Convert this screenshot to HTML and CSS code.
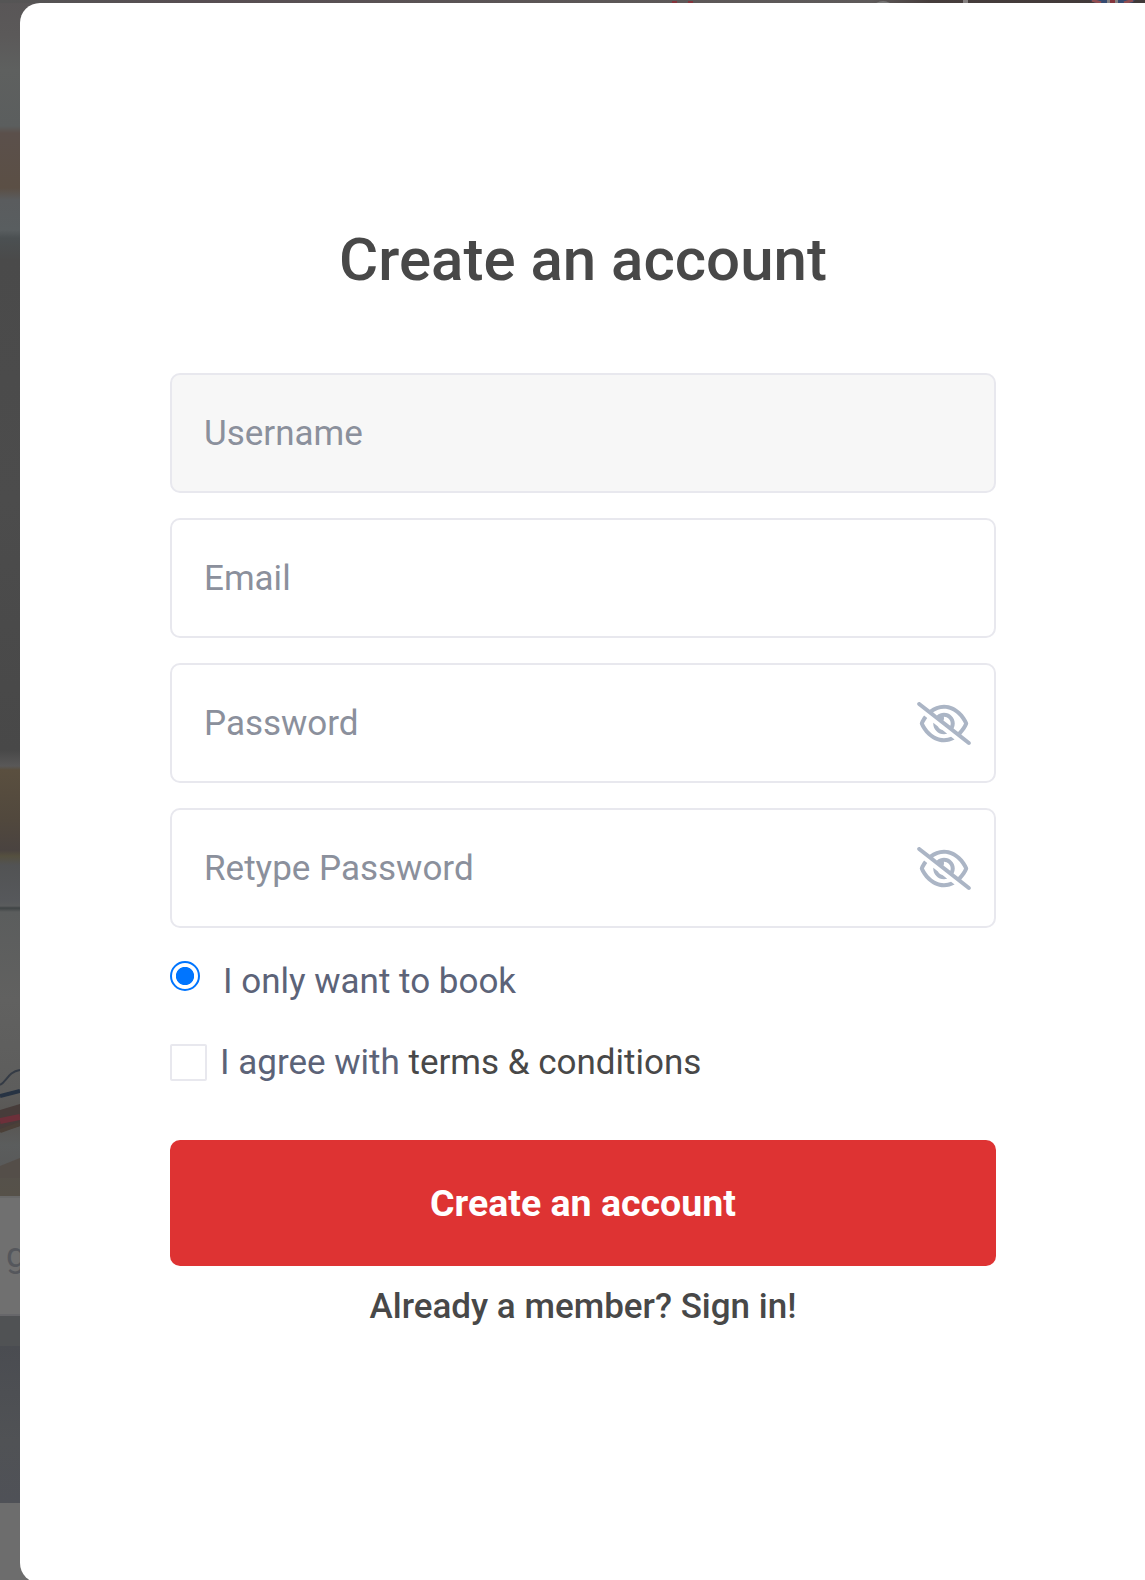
FILE: index.html
```html
<!DOCTYPE html>
<html lang="en">
<head>
    <meta charset="UTF-8">
    <meta name="viewport" content="width=device-width, initial-scale=1.0">
    <title>Create an account</title>
    <link rel="stylesheet" href="styles.css">
</head>
<body>
    <div class="page">
        <div class="hero">
            <svg class="header-edge" width="1145" height="3" viewBox="0 0 1145 3" aria-hidden="true">
                <path d="M672 1h5v2h-5zM688 1h5v2h-5z" fill="#84343c"/>
                <path d="M876 3q7-4 14 0z" fill="#777"/>
                <path d="M963 0h5v3h-5z" fill="#858080"/>
                <path d="M1090 0h45l-3 3h-37z" fill="#354a70"/>
                <path d="M1092 0l9 3M1133 0l-9 3" stroke="#8f4d50" stroke-width="3"/>
                <path d="M1107 0h11v3h-11z" fill="#858080"/>
                <path d="M1110 0h5v3h-5z" fill="#84343c"/>
            </svg>
            <svg class="hero-lines" width="20" height="110" viewBox="0 0 20 110" fill="none" aria-hidden="true">
                <path d="M0 17C7 13 8 4 20 2" stroke="#343b45" stroke-width="2"/>
                <path d="M0 28L20 23" stroke="#273343" stroke-width="4"/>
                <path d="M0 42L20 36V58L0 64z" fill="#473c3a"/>
                <path d="M0 53L20 49" stroke="#6d303a" stroke-width="6"/>
                <path d="M0 63L20 56" stroke="#4b4038" stroke-width="4"/>
                <path d="M0 98L20 90V110H0z" fill="#544e49"/>
            </svg>
        </div>
        <div class="search">g</div>
        <div class="band"></div>
        <div class="photo"></div>
    </div>

    <div class="modal">
        <h1>Create an account</h1>
        <form id="registerForm">
            <div class="field">
                <input class="username" type="text" placeholder="Username" aria-label="Username">
            </div>
            <div class="field">
                <input type="email" placeholder="Email" aria-label="Email">
            </div>
            <div class="field">
                <input type="password" placeholder="Password" aria-label="Password">
                <svg class="eye" viewBox="0 0 640 512"><path d="M38.8 5.1C28.4-3.1 13.3-1.2 5.1 9.2S-1.2 34.7 9.2 42.9l592 464c10.4 8.2 25.5 6.3 33.7-4.1s6.3-25.5-4.1-33.7L525.6 386.7c39.6-40.6 66.4-86.1 79.9-118.4c3.3-7.9 3.3-16.7 0-24.6c-14.9-35.7-46.2-87.7-93-131.1C465.5 68.8 400.8 32 320 32c-68.2 0-125 26.3-169.3 60.8L38.8 5.1zm151 118.3C226 97.7 269.5 80 320 80c65.2 0 118.8 29.6 159.9 67.7C518.4 183.5 545 226 558.6 256c-12.6 28-36.6 66.8-70.9 100.9l-53.8-42.2c9.1-17.6 14.2-37.5 14.2-58.7c0-70.7-57.3-128-128-128c-32.2 0-61.7 11.9-84.2 31.5l-46.1-36.1zM394.9 284.2l-81.5-63.9c4.2-8.5 6.6-18.2 6.6-28.3c0-5.5-.7-10.9-2-16c.7 0 1.3 0 2 0c44.2 0 80 35.8 80 80c0 9.9-1.8 19.4-5.1 28.2zm9.4 130.3C378.8 425.4 350.7 432 320 432c-65.2 0-118.8-29.6-159.9-67.7C121.6 328.5 95 286 81.4 256c8.3-18.4 21.5-41.5 39.4-64.8L83.1 161.5C60.3 191.2 44 220.8 34.5 243.7c-3.3 7.9-3.3 16.7 0 24.6c14.9 35.7 46.2 87.7 93 131.1C174.5 443.2 239.2 480 320 480c47.8 0 89.9-12.9 126.2-32.5l-41.9-33zM192 256c0 70.7 57.3 128 128 128c13.3 0 26.1-2 38.2-5.8L302 334c-23.5-5.4-43.1-21.2-53.7-42.3l-56.1-44.2c-.2 2.8-.3 5.6-.3 8.5z"/></svg>
            </div>
            <div class="field">
                <input type="password" placeholder="Retype Password" aria-label="Retype Password">
                <svg class="eye" viewBox="0 0 640 512"><path d="M38.8 5.1C28.4-3.1 13.3-1.2 5.1 9.2S-1.2 34.7 9.2 42.9l592 464c10.4 8.2 25.5 6.3 33.7-4.1s6.3-25.5-4.1-33.7L525.6 386.7c39.6-40.6 66.4-86.1 79.9-118.4c3.3-7.9 3.3-16.7 0-24.6c-14.9-35.7-46.2-87.7-93-131.1C465.5 68.8 400.8 32 320 32c-68.2 0-125 26.3-169.3 60.8L38.8 5.1zm151 118.3C226 97.7 269.5 80 320 80c65.2 0 118.8 29.6 159.9 67.7C518.4 183.5 545 226 558.6 256c-12.6 28-36.6 66.8-70.9 100.9l-53.8-42.2c9.1-17.6 14.2-37.5 14.2-58.7c0-70.7-57.3-128-128-128c-32.2 0-61.7 11.9-84.2 31.5l-46.1-36.1zM394.9 284.2l-81.5-63.9c4.2-8.5 6.6-18.2 6.6-28.3c0-5.5-.7-10.9-2-16c.7 0 1.3 0 2 0c44.2 0 80 35.8 80 80c0 9.9-1.8 19.4-5.1 28.2zm9.4 130.3C378.8 425.4 350.7 432 320 432c-65.2 0-118.8-29.6-159.9-67.7C121.6 328.5 95 286 81.4 256c8.3-18.4 21.5-41.5 39.4-64.8L83.1 161.5C60.3 191.2 44 220.8 34.5 243.7c-3.3 7.9-3.3 16.7 0 24.6c14.9 35.7 46.2 87.7 93 131.1C174.5 443.2 239.2 480 320 480c47.8 0 89.9-12.9 126.2-32.5l-41.9-33zM192 256c0 70.7 57.3 128 128 128c13.3 0 26.1-2 38.2-5.8L302 334c-23.5-5.4-43.1-21.2-53.7-42.3l-56.1-44.2c-.2 2.8-.3 5.6-.3 8.5z"/></svg>
            </div>
            <label class="role"><input type="radio" name="role" checked><span>I only want to book</span></label>
            <label class="terms"><input type="checkbox"><span>I agree with <a href="#">terms &amp; conditions</a></span></label>
            <button type="submit">Create an account</button>
        </form>
        <a class="signin" href="#">Already a member? Sign in!</a>
    </div>
</body>
</html>
```
FILE: styles.css
```css
* {
    box-sizing: border-box;
}
body {
    margin: 0;
    height: 1580px;
    overflow: hidden;
    font-family: Roboto, sans-serif;
    font-size: 35px;
    color: #5c6378;
}
a {
    color: #484848;
    text-decoration: none;
}

/* dimmed page behind the modal */
.page {
    height: 1580px;
    overflow: hidden;
    background-color: #6d6d6d;
}
.hero {
    position: relative;
    height: 1196px;
    background: linear-gradient(#595657 0, #5b5959 35px, #5e605f 70px, #5b5e5e 126px, #5b504b 133px, #5b4f45 188px, #5a5c5e 200px, #595e60 230px, #4b5052 238px, #4a4a4a 260px, #4c4c4c 500px, #484848 750px, #595858 766px, #5a4f3f 770px, #51483d 820px, #4a4340 850px, #55503f 856px, #525354 865px, #56585b 900px, #5a5c5d 906px, #3f4445 908px, #5b5d5d 912px, #616160 1000px, #5d5d5c 1090px, #585552 1120px, #5b5d5d 1145px, #595a5a 1166px, #55514b 1168px, #565149 1196px);
}
.header-edge {
    position: absolute;
    top: 0;
    left: 0;
    background: linear-gradient(90deg, #555 0, #574e52 200px, #5c5757 600px, #5e5a5a 870px, #463d3c 930px, #403939 1145px);
}
.hero-lines {
    position: absolute;
    top: 1068px;
    left: 0;
}
.search {
    height: 120px;
    padding-left: 6px;
    border-top: 2px solid #696969;
    border-bottom: 2px solid #67676a;
    background-color: #707070;
    color: #55575c;
    line-height: 116px;
}
.band {
    height: 30px;
    background-color: #505254;
}
.photo {
    height: 157px;
    background: linear-gradient(#4a4c51, #505255 60%, #4f5157);
}

.modal {
    position: absolute;
    top: 3px;
    left: 20px;
    width: 1166px;
    height: 1580px;
    padding: 222px 190px 0 150px;
    border-radius: 20px;
    background-color: #fff;
    text-align: center;
}
h1 {
    margin: 0 0 78px;
    font-size: 60px;
    font-weight: 500;
    line-height: 70px;
    color: #484848;
}
.field {
    position: relative;
    height: 120px;
    margin-bottom: 25px;
}
.field input {
    display: block;
    width: 100%;
    height: 120px;
    padding: 0 32px;
    border: 2px solid #e8e8ee;
    border-radius: 10px;
    outline: none;
    background-color: #fff;
    font: inherit;
}
.field .username {
    background-color: #f7f7f7;
}
.field input::placeholder {
    color: #8b909c;
    opacity: 1;
}
.eye {
    position: absolute;
    top: 39px;
    right: 25px;
    width: 54px;
    height: 43px;
    fill: #abb5c5;
}
.role, .terms {
    display: flex;
    line-height: 42px;
    text-align: left;
}
.role {
    margin-top: 33px;
}
.role input {
    appearance: none;
    width: 30px;
    height: 30px;
    margin: 0 23px 0 0;
    border: 2.5px solid #0075ff;
    border-radius: 50%;
    background: radial-gradient(circle, #0075ff 8.7px, #fff 9.5px);
}
.terms {
    margin-top: 39px;
}
.terms input {
    appearance: none;
    width: 37px;
    height: 37px;
    margin: 2px 13px 0 0;
    border: 2px solid #e8e8ee;
    border-radius: 2px;
}
button {
    display: block;
    width: 100%;
    height: 126px;
    margin-top: 56px;
    border: none;
    border-radius: 10px;
    background-color: #de3333;
    font: 700 37.5px Roboto, sans-serif;
    color: #fff;
    cursor: pointer;
}
.signin {
    display: block;
    margin-top: 20px;
    font-weight: 500;
    line-height: 42px;
}
```
